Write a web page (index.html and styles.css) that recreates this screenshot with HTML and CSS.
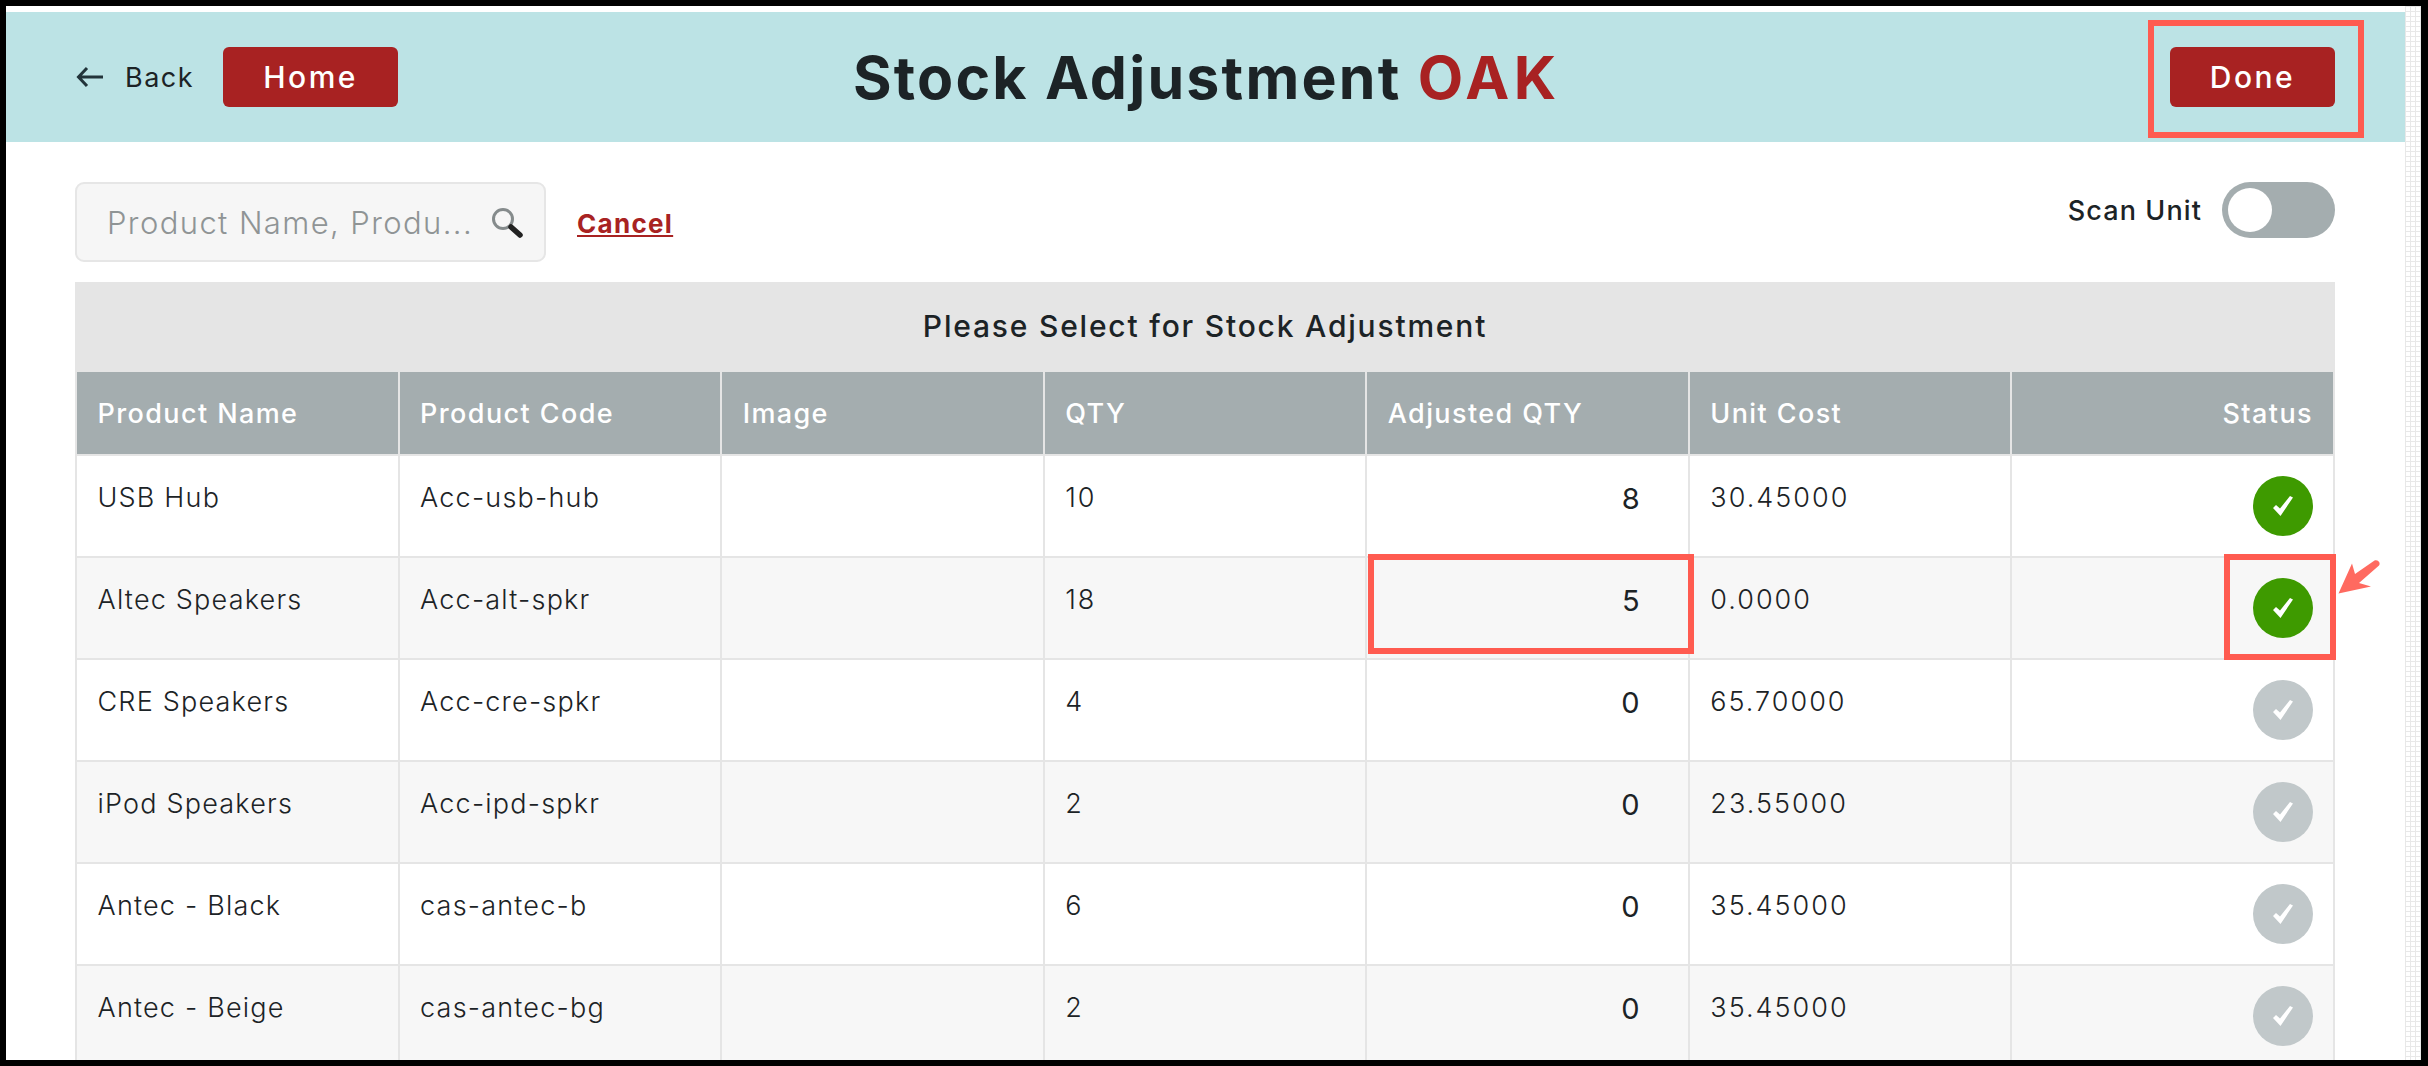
FILE: index.html
```html
<!DOCTYPE html>
<html lang="en">
<head>
    <meta charset="UTF-8">
    <meta name="viewport" content="width=device-width, initial-scale=1.0">
    <title>Stock Adjustment OAK</title>
    <link rel="stylesheet" href="styles.css">
</head>
<body>
    <div class="frame">
        <div class="page">
            <header class="topBar">
                <div class="topLeft">
                    <a class="backLink" href="#">
                        <svg class="backArrow" viewBox="0 0 27 22" width="27" height="22"><path d="M27 11H2M11 2l-8.500 9 8.500 9" fill="none" stroke="#22343a" stroke-width="3"/></svg>
                        Back
                    </a>
                    <a class="btn" href="#">Home</a>
                </div>
                <h1 class="pageTitle">Stock Adjustment <span class="store">OAK</span></h1>
                <a class="btn btnDone" href="#">Done</a>
            </header>

            <main class="content">
                <div class="toolRow">
                    <div class="searchBox">
                        <span class="searchHint">Product Name, Produ...</span>
                        <svg class="searchIcon" viewBox="0 0 34 32" width="34" height="32">
                            <circle cx="13" cy="13" r="9.500" fill="none" stroke="#858b8c" stroke-width="3"/>
                            <path d="M21 21l9 8" stroke="#222" stroke-width="5.500" stroke-linecap="round"/>
                        </svg>
                    </div>
                    <a class="cancelLink" href="#">Cancel</a>
                    <div class="scanUnit">
                        <span>Scan Unit</span>
                        <span class="toggle"><span class="knob"></span></span>
                    </div>
                </div>

                <div class="tableTitle">Please Select for Stock Adjustment</div>
                <table class="stockTable">
                    <thead>
                        <tr>
                            <th>Product Name</th>
                            <th>Product Code</th>
                            <th>Image</th>
                            <th>QTY</th>
                            <th>Adjusted QTY</th>
                            <th>Unit Cost</th>
                            <th class="right">Status</th>
                        </tr>
                    </thead>
                    <tbody>
                        <tr>
                            <td>USB Hub</td><td>Acc-usb-hub</td><td></td><td class="num">10</td><td class="adj">8</td><td class="num">30.45000</td>
                            <td class="statusCell"><span class="status on"><svg viewBox="0 0 20 20" width="20" height="20"><path class="tick" d="M0 12l3-3 4 3.500L17 0l3 1.500L7.500 20z"/></svg></span></td>
                        </tr>
                        <tr>
                            <td>Altec Speakers</td><td>Acc-alt-spkr</td><td></td><td class="num">18</td><td class="adj">5</td><td class="num">0.0000</td>
                            <td class="statusCell"><span class="status on"><svg viewBox="0 0 20 20" width="20" height="20"><path class="tick" d="M0 12l3-3 4 3.500L17 0l3 1.500L7.500 20z"/></svg></span></td>
                        </tr>
                        <tr>
                            <td>CRE Speakers</td><td>Acc-cre-spkr</td><td></td><td class="num">4</td><td class="adj">0</td><td class="num">65.70000</td>
                            <td class="statusCell"><span class="status"><svg viewBox="0 0 20 20" width="20" height="20"><path class="tick" d="M0 12l3-3 4 3.500L17 0l3 1.500L7.500 20z"/></svg></span></td>
                        </tr>
                        <tr>
                            <td>iPod Speakers</td><td>Acc-ipd-spkr</td><td></td><td class="num">2</td><td class="adj">0</td><td class="num">23.55000</td>
                            <td class="statusCell"><span class="status"><svg viewBox="0 0 20 20" width="20" height="20"><path class="tick" d="M0 12l3-3 4 3.500L17 0l3 1.500L7.500 20z"/></svg></span></td>
                        </tr>
                        <tr>
                            <td>Antec - Black</td><td>cas-antec-b</td><td></td><td class="num">6</td><td class="adj">0</td><td class="num">35.45000</td>
                            <td class="statusCell"><span class="status"><svg viewBox="0 0 20 20" width="20" height="20"><path class="tick" d="M0 12l3-3 4 3.500L17 0l3 1.500L7.500 20z"/></svg></span></td>
                        </tr>
                        <tr>
                            <td>Antec - Beige</td><td>cas-antec-bg</td><td></td><td class="num">2</td><td class="adj">0</td><td class="num">35.45000</td>
                            <td class="statusCell"><span class="status"><svg viewBox="0 0 20 20" width="20" height="20"><path class="tick" d="M0 12l3-3 4 3.500L17 0l3 1.500L7.500 20z"/></svg></span></td>
                        </tr>
                    </tbody>
                </table>
            </main>
        </div>
        <div class="scrollTrack"></div>

        <!-- red marks drawn over the screenshot -->
        <div class="mark markDone"></div>
        <div class="mark markQty"></div>
        <div class="mark markStatus"></div>
        <svg class="markArrow" viewBox="0 0 60 50" width="60" height="50">
            <path d="M8.500 43.500L22 13.500L25 24L44.500 10.500C48 9 51 13 49 15.500L29 33L41 36.500Z" fill="#ff6a60"/>
        </svg>
    </div>
</body>
</html>
```

FILE: styles.css
```css
* {
    box-sizing: border-box;
}

body {
    margin: 0;
    height: 1066px;
    padding: 6px 7px 6px 6px;
    background-color: #000;
    overflow: hidden;
    font-family: Inter, "Liberation Sans", sans-serif;
    color: #1c2326;
}

a {
    text-decoration: none;
    color: inherit;
}

.frame {
    position: relative;
    display: flex;
    height: 1054px;
    overflow: hidden;
    background-color: #fff;
}

.page {
    width: 2399px;
    padding-top: 6px;
}

/* top bar */
.topBar {
    display: flex;
    align-items: center;
    height: 130px;
    padding: 0 70px;
    background-color: #bce3e5;
}

.topLeft {
    display: flex;
    align-items: center;
    width: 777px;
}

.backLink {
    display: flex;
    align-items: center;
    gap: 22px;
    margin-right: 29px;
    font-size: 27px;
    letter-spacing: 1.500px;
}

.btn {
    display: flex;
    align-items: center;
    justify-content: center;
    width: 175px;
    height: 60px;
    border-radius: 6px;
    background-color: #a82222;
    color: #fff;
    font-size: 30px;
    font-weight: 500;
    letter-spacing: 2.500px;
}

.btnDone {
    width: 165px;
    margin-left: auto;
}

.pageTitle {
    margin: 0;
    font-size: 59px;
    font-weight: 700;
    letter-spacing: 2.200px;
}

.store {
    color: #a82222;
    letter-spacing: 4.500px;
}

/* search row */
.content {
    padding: 40px 70px 0 69px;
}

.toolRow {
    display: flex;
    align-items: flex-start;
    height: 100px;
}

.searchBox {
    display: flex;
    align-items: center;
    justify-content: space-between;
    width: 471px;
    height: 80px;
    padding: 0 20px 0 30px;
    border: 2px solid #e6e6e6;
    border-radius: 9px;
    background-color: #f6f6f6;
}

.searchHint {
    font-size: 31px;
    font-weight: 300;
    letter-spacing: 1.400px;
    color: #8f9495;
    white-space: nowrap;
}

.searchIcon {
    flex: none;
    filter: blur(0.6px);
}

.cancelLink {
    margin: 26px 0 0 31px;
    font-size: 26px;
    font-weight: 700;
    letter-spacing: 1.300px;
    color: #a82222;
    text-decoration: underline;
}

.scanUnit {
    display: flex;
    align-items: center;
    gap: 20px;
    margin-left: auto;
    font-size: 27px;
    font-weight: 500;
    letter-spacing: 1.100px;
}

.toggle {
    display: block;
    width: 113px;
    height: 56px;
    padding: 6px;
    border-radius: 28px;
    background-color: #a4adaf;
}

.knob {
    display: block;
    width: 44px;
    height: 44px;
    border-radius: 50%;
    background-color: #fff;
}

/* table */
.tableTitle {
    height: 90px;
    line-height: 88px;
    text-align: center;
    background-color: #e5e5e5;
    font-size: 30px;
    font-weight: 500;
    letter-spacing: 1.800px;
}

.stockTable {
    width: 100%;
    table-layout: fixed;
    border-collapse: collapse;
}

.stockTable th {
    height: 83px;
    padding: 0 20px 0 20.500px;
    text-align: left;
    background-color: #a4adaf;
    border: 2px solid #e5e5e5;
    border-top: 0;
    color: #fff;
    font-size: 27px;
    font-weight: 500;
    letter-spacing: 1.400px;
}

.stockTable th.right {
    text-align: right;
}

.stockTable td {
    height: 102px;
    padding: 25px 20px 0 20.500px;
    vertical-align: top;
    border: 2px solid #e5e5e5;
    font-size: 27px;
    font-weight: 300;
    letter-spacing: 1.200px;
}

.stockTable tbody tr:nth-child(even) {
    background-color: #f7f7f7;
}

.stockTable td.num {
    letter-spacing: 2px;
}

.stockTable td.adj {
    padding-right: 47px;
    text-align: right;
    font-size: 29px;
    font-weight: 400;
}

.stockTable td.statusCell {
    padding: 20px 20px 0 0;
    text-align: right;
}

.status {
    display: inline-flex;
    align-items: center;
    justify-content: center;
    width: 60px;
    height: 60px;
    border-radius: 50%;
    background-color: #c1c8ca;
}

.status.on {
    background-color: #3e9a00;
}

.tick {
    fill: #fff;
}

.scrollTrack {
    width: 16px;
    background-color: #fff;
    background-image:
        linear-gradient(#e8e8e8 1.500px, transparent 1.500px),
        linear-gradient(90deg, #e8e8e8 1.500px, transparent 1.500px);
    background-size: 5px 5px;
}

/* annotation marks */
.mark {
    position: absolute;
    border: 6px solid #ff5b50;
}

.markDone {
    left: 2142px;
    top: 14px;
    width: 216px;
    height: 118px;
}

.markQty {
    left: 1362px;
    top: 548px;
    width: 326px;
    height: 100px;
}

.markStatus {
    left: 2218px;
    top: 548px;
    width: 112px;
    height: 106px;
}

.markArrow {
    position: absolute;
    left: 2324px;
    top: 544px;
}
```
